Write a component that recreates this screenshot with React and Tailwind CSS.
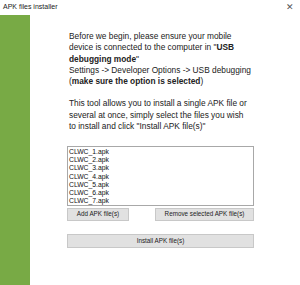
export default function App() {
  const files = [1, 2, 3, 4, 5, 6, 7].map((n) => `CLWC_${n}.apk`);
  return (
    <div className="w-[300px] h-[285px] bg-white flex flex-col overflow-hidden" style={{ fontFamily: '"Liberation Sans", Arial, sans-serif' }}>
      <div className="h-[15px] flex items-center justify-between pl-[3px] pr-[6px]">
        <span className="text-[7px] text-[#222]">APK files installer</span>
        <span className="text-[9px] text-[#555] leading-none">✕</span>
      </div>
      <div className="flex flex-1">
        <div className="w-[30px] bg-[#78aa45]" />
        <div className="flex flex-col pl-[37px] pt-[16px] w-[232px]">
          <div className="ml-[2px] text-[8.33px] leading-[11.25px] text-[#222] w-[185px]">
            <p>
              Before we begin, please ensure your mobile device is connected to the computer in "<b>USB debugging mode</b>"
            </p>
            <p>Settings -&gt; Developer Options -&gt; USB debugging</p>
            <p>
              (<b>make sure the option is selected</b>)
            </p>
            <p className="mt-[11px] w-[181px]">
              This tool allows you to install a single APK file or several at once, simply select the files you wish to install and click "Install APK file(s)"
            </p>
          </div>
          <div className="mt-[14px] w-[187px] h-[60px] border border-[#a8a8a8] pl-[1px] pt-[1px] text-[6.8px] leading-[8.2px] text-[#111] overflow-hidden">
            {files.map((f) => (
              <div key={f}>{f}</div>
            ))}
          </div>
          <div className="flex justify-between mt-[2px] w-[187px]">
            <button className="w-[62px] h-[13px] bg-[#e1e1e1] border border-[#c8c8c8] text-[6.3px] text-[#222] leading-none">Add APK file(s)</button>
            <button className="w-[99px] h-[13px] bg-[#e1e1e1] border border-[#c8c8c8] text-[6.3px] text-[#222] leading-none">Remove selected APK file(s)</button>
          </div>
          <button className="mt-[13px] w-[187px] h-[14px] bg-[#e1e1e1] border border-[#c8c8c8] text-[6.3px] text-[#222] leading-none">Install APK file(s)</button>
        </div>
      </div>
    </div>
  );
}
